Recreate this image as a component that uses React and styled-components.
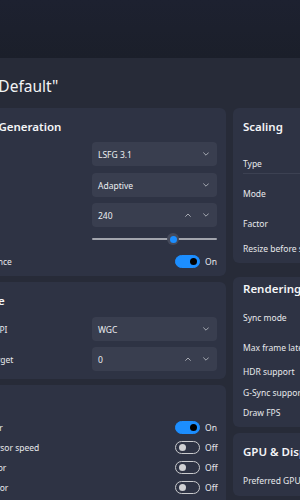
import React from 'react';
import styled, { createGlobalStyle } from 'styled-components';

const Global = createGlobalStyle`
  html, body { margin: 0; padding: 0; background: #272b38; }
  body { font-family: "Noto Sans", "Open Sans", sans-serif; color: #e6e7ea; }
`;

const Screen = styled.div`
  width: 300px;
  height: 500px;
  overflow: hidden;
  background: #272b38;
  display: flex;
  flex-direction: column;
`;

const TitleBand = styled.div`
  height: 58px;
  flex: none;
  background: linear-gradient(180deg, #1d2130 0%, #1b1f2a 100%);
`;

const Header = styled.header`
  height: 50px;
  flex: none;
  display: flex;
  align-items: flex-start;
`;

const Heading = styled.h1`
  margin: 18px 0 0 -8px;
  font-size: 15.5px;
  line-height: 20px;
  font-weight: 400;
  color: #f2f3f5;
  white-space: nowrap;
`;

const Columns = styled.div`
  display: flex;
  align-items: flex-start;
  gap: 7px;
  margin-left: -50px;
`;

const Column = styled.div`
  flex: none;
  width: ${p => p.$w}px;
  display: flex;
  flex-direction: column;
  gap: 6px;
`;

const Card = styled.section`
  background: #2e3344;
  border-radius: 6px;
  padding: ${p => p.$pt ?? 11}px 9px ${p => p.$pb ?? 6}px 10px;
  margin-top: ${p => p.$mt ?? 0}px;
  display: flex;
  flex-direction: column;
`;

const CardTitle = styled.h2`
  margin: 0;
  font-size: 11.5px;
  line-height: 16px;
  font-weight: 600;
  color: #f4f5f7;
  white-space: nowrap;
`;

const Row = styled.div`
  height: ${p => p.$h ?? 20}px;
  margin-top: ${p => p.$mt ?? 0}px;
  display: flex;
  align-items: center;
  justify-content: space-between;
  flex: none;
`;

const Label = styled.span`
  font-size: 8.5px;
  color: #e8e9ec;
  white-space: nowrap;
`;

const Divider = styled.div`
  height: 1px;
  background: #3c4152;
  flex: none;
`;

const Field = styled.div`
  width: 125px;
  height: 24px;
  box-sizing: border-box;
  background: #393e4f;
  border-radius: 4px;
  display: flex;
  align-items: center;
  justify-content: space-between;
  padding: 0 8px 0 6px;
  font-size: 8.5px;
  color: #eceef1;
`;

const Spinners = styled.div`
  display: flex;
  align-items: center;
  gap: 12px;
`;

const Chevron = ({ up }) => (
  <svg width="6" height="4" viewBox="0 0 6 4" style={{ display: 'block' }}>
    <polyline
      points={up ? '0.6,3.4 3,1 5.4,3.4' : '0.6,0.8 3,3.2 5.4,0.8'}
      fill="none"
      stroke="#c3c5cc"
      strokeWidth="0.8"
      strokeLinecap="round"
      strokeLinejoin="round"
    />
  </svg>
);

const SliderTrack = styled.div`
  position: relative;
  width: 125px;
  height: 2px;
  border-radius: 1px;
  background: #a2a5ad;
`;

const SliderThumb = styled.div`
  position: absolute;
  top: 50%;
  width: 12px;
  height: 12px;
  margin: -6px 0 0 -6px;
  border-radius: 50%;
  background: #454a5b;
  display: flex;
  align-items: center;
  justify-content: center;
  &::after {
    content: "";
    width: 7px;
    height: 7px;
    border-radius: 50%;
    background: #1c8eff;
  }
`;

const ToggleWrap = styled.div`
  display: flex;
  align-items: center;
  gap: 5px;
`;

const Track = styled.div`
  width: 25px;
  height: 13px;
  box-sizing: border-box;
  border-radius: 7px;
  display: flex;
  align-items: center;
  padding: 0 2.5px;
  justify-content: ${p => (p.$on ? 'flex-end' : 'flex-start')};
  background: ${p => (p.$on ? '#1c8eff' : 'transparent')};
  border: 1px solid ${p => (p.$on ? '#1c8eff' : '#c9cacd')};
`;

const Knob = styled.div`
  width: 7px;
  height: 7px;
  border-radius: 50%;
  background: ${p => (p.$on ? '#000000' : '#cfd0d3')};
`;

const ToggleText = styled.span`
  width: 12px;
  font-size: 8.5px;
  color: #e8e9ec;
`;

const Toggle = ({ on }) => (
  <ToggleWrap>
    <Track $on={on}>
      <Knob $on={on} />
    </Track>
    <ToggleText>{on ? 'On' : 'Off'}</ToggleText>
  </ToggleWrap>
);

const Select = ({ value }) => (
  <Field>
    <span>{value}</span>
    <Chevron />
  </Field>
);

const NumberBox = ({ value }) => (
  <Field>
    <span>{value}</span>
    <Spinners>
      <Chevron up />
      <Chevron />
    </Spinners>
  </Field>
);

const Slider = ({ value }) => (
  <SliderTrack>
    <SliderThumb style={{ left: `${value * 100}%` }} />
  </SliderTrack>
);

export default function App() {
  return (
    <Screen>
      <Global />
      <TitleBand />
      <Header>
        <Heading>"Default"</Heading>
      </Header>
      <Columns>
        <Column $w={276}>
          <Card>
            <CardTitle>Frame Generation</CardTitle>
            <Row $h={24} $mt={7}><Label>Type</Label><Select value="LSFG 3.1" /></Row>
            <Row $h={24} $mt={7}><Label>Mode</Label><Select value="Adaptive" /></Row>
            <Row $h={24} $mt={6}><Label>Target</Label><NumberBox value="240" /></Row>
            <Row $h={14} $mt={5}><Label>Scale</Label><Slider value={0.648} /></Row>
            <Row $h={18} $mt={6}><Label>Performance</Label><Toggle on /></Row>
          </Card>
          <Card $pb={8}>
            <CardTitle>Capture</CardTitle>
            <Row $h={24} $mt={8}><Label>Capture API</Label><Select value="WGC" /></Row>
            <Row $h={24} $mt={6}><Label>Queue target</Label><NumberBox value="0" /></Row>
          </Card>
          <Card $pb={10}>
            <CardTitle>Cursor</CardTitle>
            <Row $mt={5}><Label>Clip cursor</Label><Toggle on /></Row>
            <Row><Label>Adjust cursor speed</Label><Toggle /></Row>
            <Row><Label>Hide cursor</Label><Toggle /></Row>
            <Row><Label>Scale cursor</Label><Toggle /></Row>
          </Card>
        </Column>
        <Column $w={240}>
          <Card $pb={5}>
            <CardTitle>Scaling</CardTitle>
            <Row $mt={18}><Label>Type</Label></Row>
            <Divider />
            <Row $mt={9}><Label>Mode</Label></Row>
            <Row $mt={10}><Label>Factor</Label></Row>
            <Row $mt={5}><Label>Resize before scaling</Label></Row>
          </Card>
          <Card $mt={8} $pt={4} $pb={5}>
            <CardTitle>Rendering</CardTitle>
            <Row $mt={10}><Label>Sync mode</Label></Row>
            <Row $mt={10}><Label>Max frame latency</Label></Row>
            <Row $mt={4}><Label>HDR support</Label></Row>
            <Row $mt={1}><Label>G-Sync support</Label></Row>
            <Row><Label>Draw FPS</Label></Row>
          </Card>
          <Card>
            <CardTitle>GPU &amp; Display</CardTitle>
            <Row $mt={10}><Label>Preferred GPU</Label></Row>
          </Card>
        </Column>
      </Columns>
    </Screen>
  );
}
